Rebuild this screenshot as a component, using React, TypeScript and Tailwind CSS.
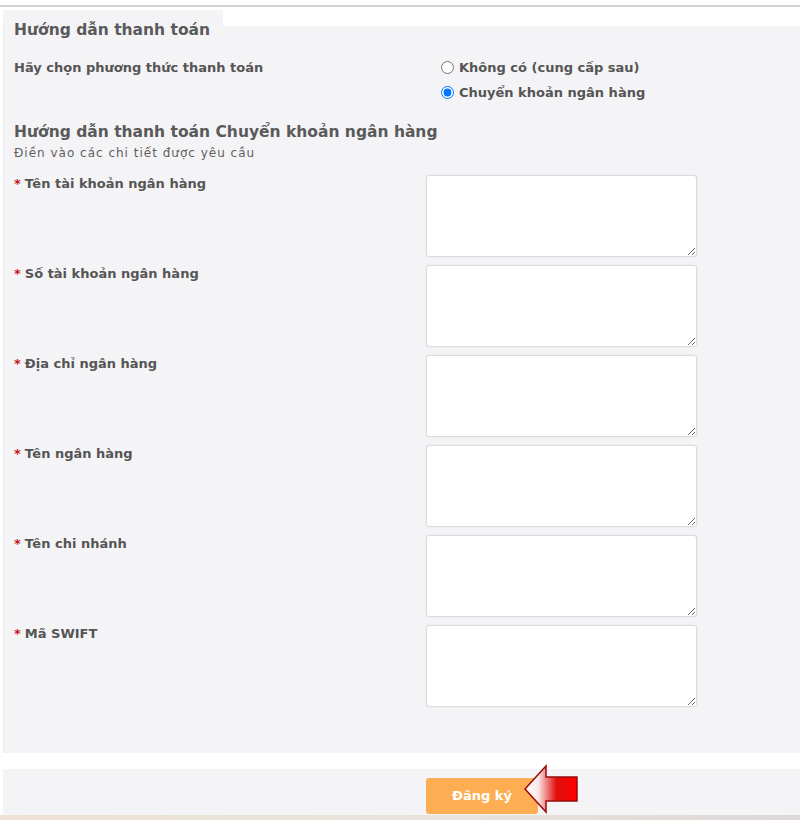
const fields = [
  'Tên tài khoản ngân hàng',
  'Số tài khoản ngân hàng',
  'Địa chỉ ngân hàng',
  'Tên ngân hàng',
  'Tên chi nhánh',
  'Mã SWIFT',
];

function Arrow() {
  return (
    <svg className="absolute left-[520px] top-[762px]" width="60" height="54" viewBox="0 0 60 54">
      <defs>
        <linearGradient id="arrowFill" x1="0" y1="0" x2="1" y2="0">
          <stop offset="0" stopColor="#ffffff" />
          <stop offset="0.25" stopColor="#fbeaea" />
          <stop offset="0.6" stopColor="#e01010" />
          <stop offset="1" stopColor="#ff0000" />
        </linearGradient>
      </defs>
      <polygon
        points="5,27 26,4 26,15 57,15 57,39 26,39 26,50"
        fill="url(#arrowFill)"
        stroke="#9b0a0a"
        strokeWidth="1.5"
        strokeLinejoin="miter"
      />
    </svg>
  );
}

export default function App() {
  return (
    <div
      className="relative w-[800px] h-[820px] overflow-hidden bg-white text-[#555]"
      style={{ fontFamily: '"DejaVu Sans", Verdana, sans-serif' }}
    >
      <div className="h-[5px]" />
      <div className="h-[2px] bg-[#d2d2d2]" />
      <div className="h-[3px]" />

      {/* legend tab */}
      <div className="ml-[3px] w-[220px] h-[16px] bg-[#f4f4f6]">
        <h2 className="relative z-10 pl-[11px] pt-[10px] text-[15.5px] leading-[20px] text-[#5a5a5a] font-bold whitespace-nowrap">
          Hướng dẫn thanh toán
        </h2>
      </div>

      {/* panel */}
      <div className="ml-[3px] bg-[#f4f4f6] border-l border-[#e9e9ec] pl-[10px] pt-[29px] pb-[46px]">
        <div className="grid grid-cols-[412px_1fr]">
          <div className="text-[13px] leading-[25px] font-bold">Hãy chọn phương thức thanh toán</div>
          <div className="pl-[15px] flex flex-col text-[13px] font-bold">
            <label className="h-[25px] flex items-center gap-[5px]">
              <input type="radio" name="pay" className="m-0 w-[13px] h-[13px]" readOnly />
              <span>Không có (cung cấp sau)</span>
            </label>
            <label className="h-[25px] flex items-center gap-[5px]">
              <input type="radio" name="pay" className="m-0 w-[13px] h-[13px]" defaultChecked />
              <span>Chuyển khoản ngân hàng</span>
            </label>
          </div>
        </div>

        <h3 className="mt-[17px] text-[15.5px] leading-[20px] text-[#5a5a5a] font-bold">
          Hướng dẫn thanh toán Chuyển khoản ngân hàng
        </h3>
        <p className="mt-[3px] text-[12px] leading-[16px] tracking-[1px] text-[#5f5f5f]">
          Điền vào các chi tiết được yêu cầu
        </p>

        <div className="mt-[14px] flex flex-col gap-[8px]">
          {fields.map((f) => (
            <div key={f} className="grid grid-cols-[412px_1fr]">
              <div className="text-[13px] leading-[18px] font-bold">
                <span className="text-[#c0161b] mr-[4px]">*</span>
                {f}
              </div>
              <textarea className="w-[271px] h-[82px] bg-white border border-[#dcdcde] rounded-[3px] shadow-[0_0_2px_rgba(0,0,0,0.08)] outline-none" />
            </div>
          ))}
        </div>
      </div>

      <div className="h-[16px]" />

      {/* bottom bar */}
      <div className="ml-[3px] h-[46px] bg-[#f4f4f6] pt-[9px] pl-[423px]">
        <button className="w-[112px] h-[36px] rounded-[3px] bg-[#fdad52] text-white text-[13px] font-bold">
          Đăng ký
        </button>
      </div>
      <div className="h-[5px] bg-gradient-to-r from-[#efe2d6] via-[#e9e4dc] to-[#dcd8d8]" />

      <Arrow />
    </div>
  );
}
